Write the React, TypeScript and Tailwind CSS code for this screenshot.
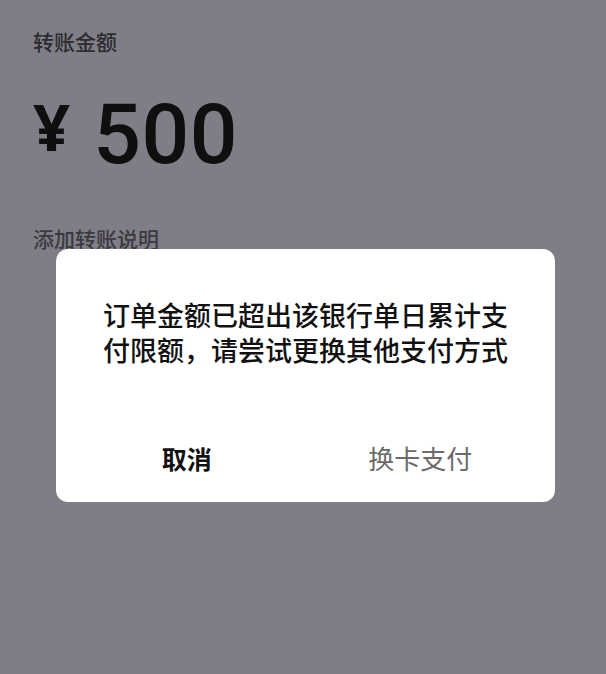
import React from "react";

const cjk = '"Noto Sans CJK SC", "Noto Sans", sans-serif';

export default function App() {
  return (
    <div
      className="relative h-[674px] w-full overflow-hidden bg-[#7f7e86]"
      style={{ fontFamily: cjk }}
    >
      {/* transfer page underneath the dim layer */}
      <div className="flex flex-col px-[33px] pt-[27px]">
        <div className="text-[21px] font-medium leading-[28px] text-[#2b2b30]">转账金额</div>
        <div className="mt-[40px] flex items-start">
          <span
            className="mt-[-1px] text-[65px] font-bold leading-none text-[#0f0f0f]"
            style={{ fontFamily: '"Noto Sans", sans-serif' }}
          >
            ¥
          </span>
          <span
            className="ml-[23px] mt-[-2px] text-[84px] font-medium leading-none tracking-[0.5px] text-[#0f0f0f]"
            style={{ fontFamily: 'Roboto, "Noto Sans", sans-serif' }}
          >
            500
          </span>
        </div>
        <div className="mt-[47px] text-[21px] font-medium leading-[28px] text-[#3a3a40]">
          添加转账说明
        </div>
      </div>

      {/* alert dialog */}
      <div className="absolute left-[56px] top-[249px] flex h-[253px] w-[499px] flex-col rounded-[12px] bg-white">
        <div className="flex flex-1 flex-col items-center justify-start pt-[48px] text-center text-[27px] font-medium leading-[35px] text-[#111]">
          <div>订单金额已超出该银行单日累计支</div>
          <div>付限额，请尝试更换其他支付方式</div>
        </div>
        <div className="flex h-[62px] items-start">
          <button className="flex-1 pl-[14px] text-[25px] font-bold leading-[36px] text-[#111]">
            取消
          </button>
          <button className="flex-1 pr-[18px] text-[26px] leading-[36px] text-[#6b6b6b]">
            换卡支付
          </button>
        </div>
      </div>
    </div>
  );
}
